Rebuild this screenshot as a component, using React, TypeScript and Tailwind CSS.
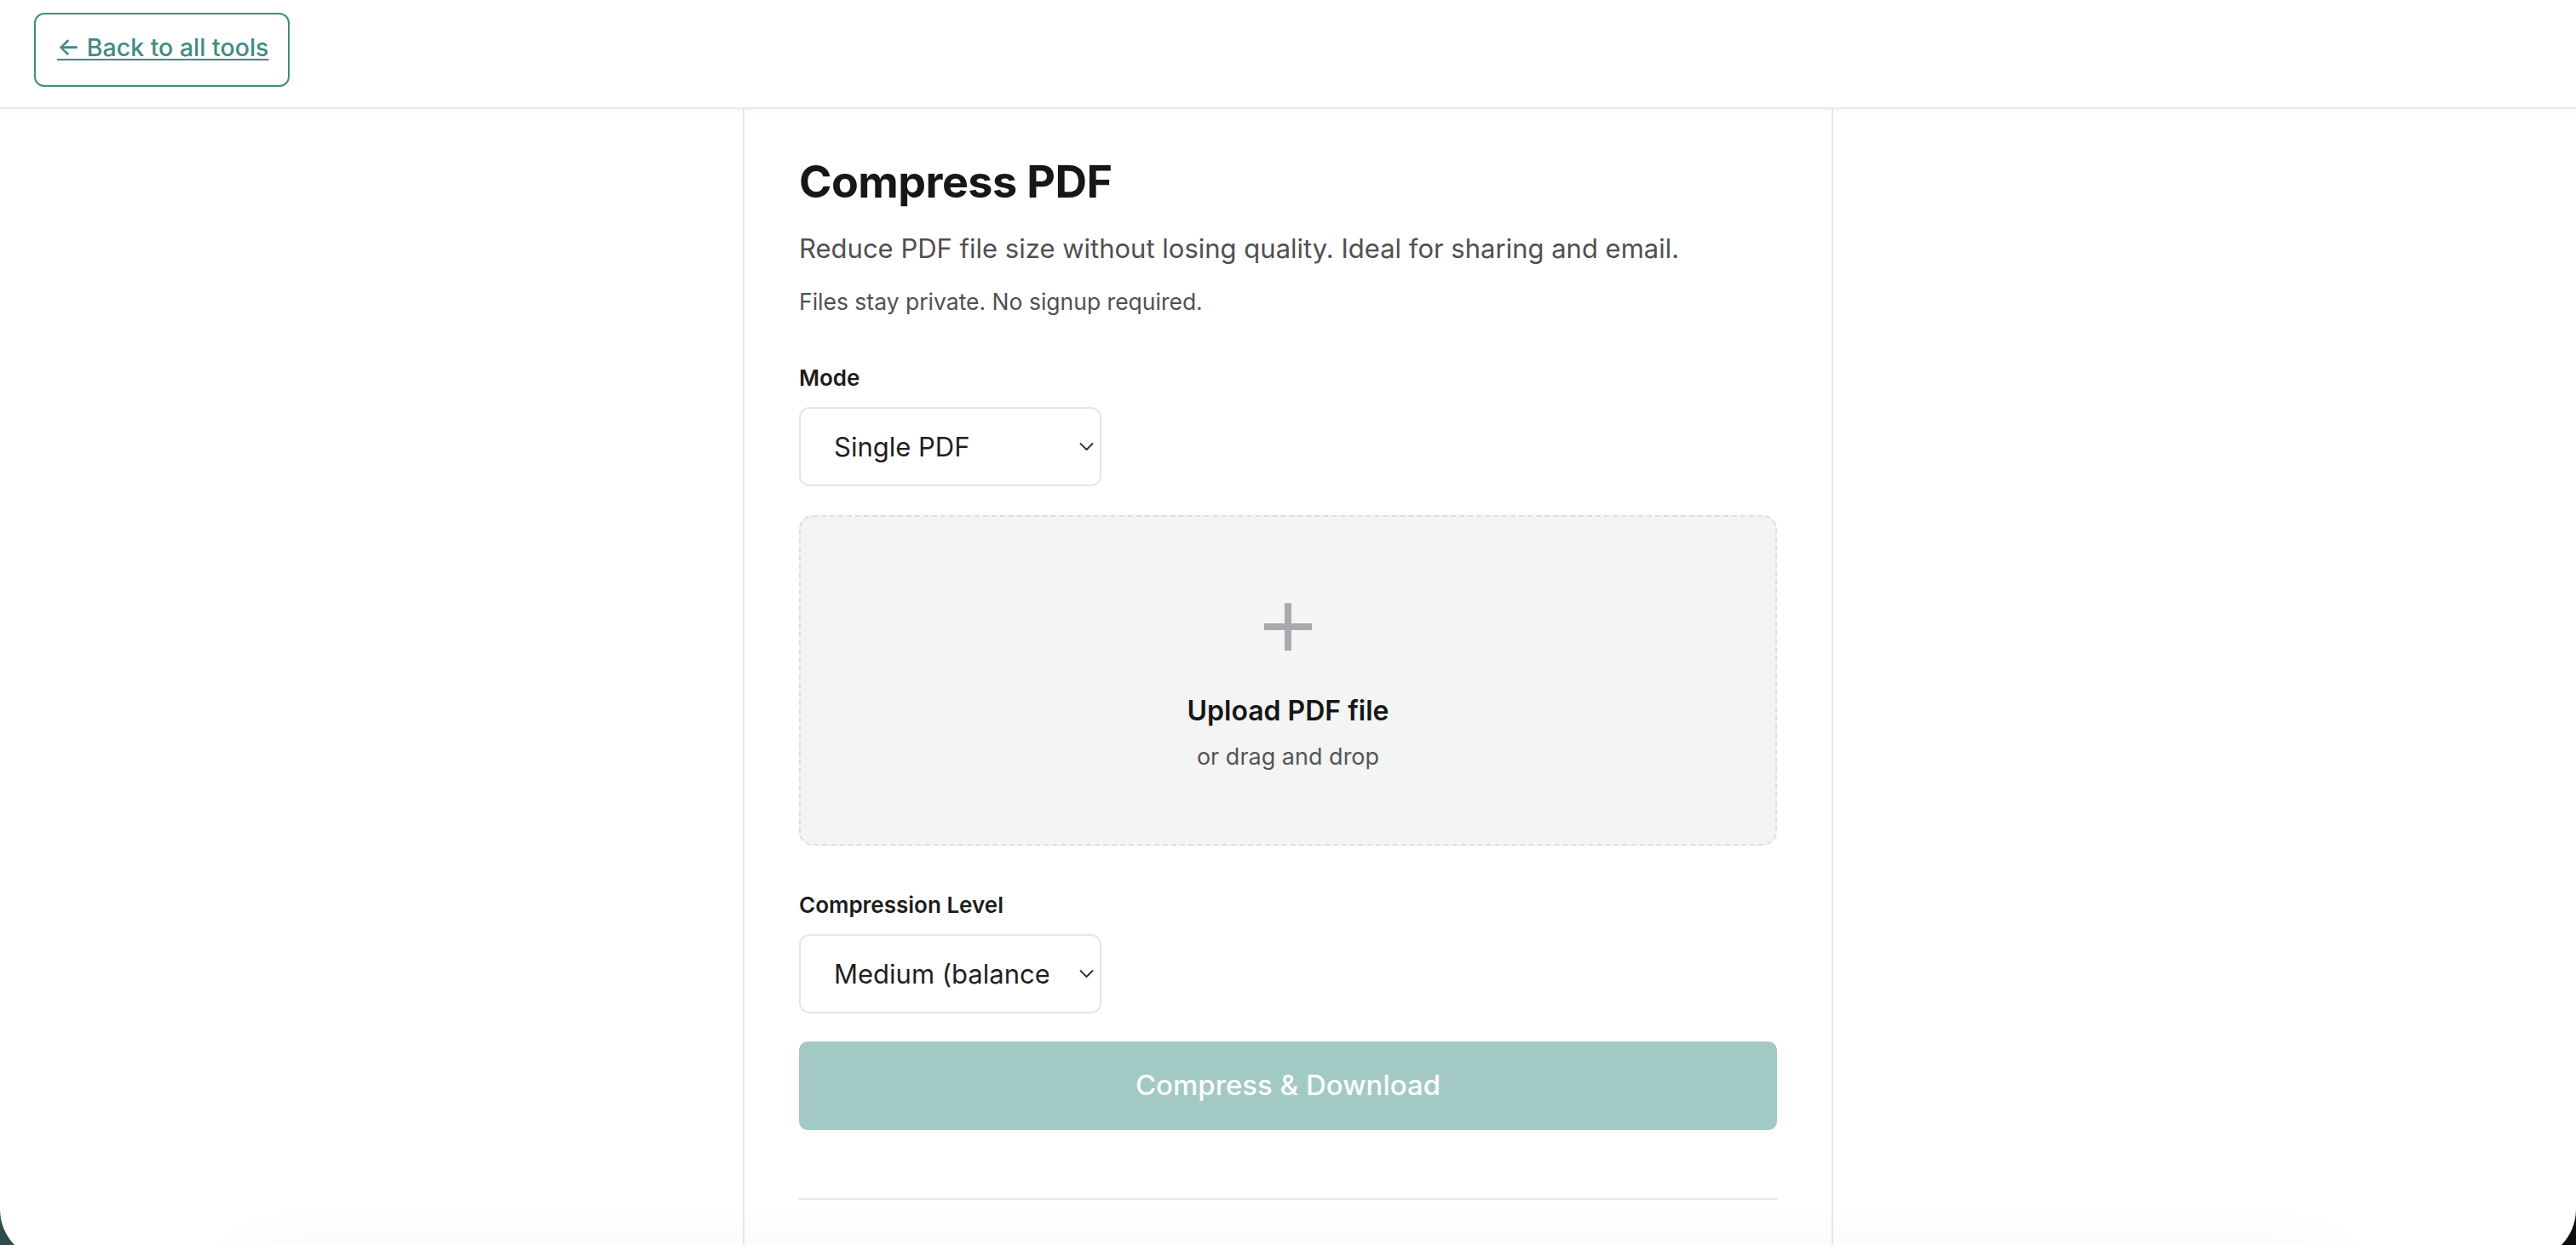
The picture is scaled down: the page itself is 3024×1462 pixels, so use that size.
import React from "react";

function Chevron(): JSX.Element {
  return (
    <svg width="17" height="11" viewBox="0 0 17 11" fill="none" className="shrink-0">
      <polyline points="1.5,2 8.5,9 15.5,2" stroke="#2a2a2a" strokeWidth="1.8" strokeLinecap="round" strokeLinejoin="round" />
    </svg>
  );
}

function SelectBox({ value }: { value: string }): JSX.Element {
  return (
    <div className="flex h-[93px] w-[355px] items-center rounded-[12px] border-2 border-[#e6e6e6] bg-white pl-[39px] pr-[7px]">
      <span className="w-[252px] overflow-hidden whitespace-nowrap text-[31px] leading-[40px] text-[#1f1f1f]">{value}</span>
      <span className="flex-1" />
      <Chevron />
    </div>
  );
}

function FieldLabel({ children, className = "" }: { children: React.ReactNode; className?: string }): JSX.Element {
  return <div className={`text-[26px] font-semibold leading-[36px] text-[#1c1c1c] ${className}`}>{children}</div>;
}

export default function App(): JSX.Element {
  return (
    <div className="h-[1462px] overflow-hidden bg-[linear-gradient(90deg,#2e4b49,#0c0c0c)] font-['Inter',sans-serif]">
      <div className="h-[1480px] overflow-hidden rounded-b-[60px] bg-white">
        <header className="relative z-10 h-[128px] border-b-2 border-[#e9e9e9] bg-white pl-[40px] pt-[15px] shadow-[0_2px_8px_rgba(0,0,0,0.04)]">
          <a
            href="#"
            className="flex h-[87px] w-[300px] items-center rounded-[12px] border-2 border-[#3f8c81] pb-[6px] pl-[25px] text-[28.5px] font-medium leading-[40px] text-[#3f8c81] underline decoration-2 underline-offset-[3px]"
          >
            ← Back to all tools
          </a>
        </header>

        <main className="mx-auto h-[1352px] w-[1280px] border-x-2 border-[#e8e8e8] bg-white px-16 pt-[55px]">
          <h1 className="text-[52px] font-bold leading-[62px] tracking-[-0.01em] text-[#171717]">Compress PDF</h1>
          <p className="mt-[27px] text-[31px] leading-[40px] text-[#505050]">
            Reduce PDF file size without losing quality. Ideal for sharing and email.
          </p>
          <p className="mt-[24px] text-[26.5px] leading-[36px] text-[#505050]">Files stay private. No signup required.</p>

          <FieldLabel className="mt-[54px]">Mode</FieldLabel>
          <div className="mt-[16px]">
            <SelectBox value="Single PDF" />
          </div>

          <div className="mt-[34px] flex h-[388px] flex-col items-center rounded-[16px] border-2 border-dashed border-[#dedede] bg-[#f3f4f4] pt-[101px]">
            <svg width="56" height="56" viewBox="0 0 56 56">
              <rect x="24" y="0" width="8" height="56" fill="#a9abae" />
              <rect x="0" y="24" width="56" height="8" fill="#a9abae" />
            </svg>
            <div className="mt-[51px] text-[32px] font-semibold leading-[40px] text-[#161616]">Upload PDF file</div>
            <div className="mt-[16px] text-[27px] leading-[36px] text-[#555555]">or drag and drop</div>
          </div>

          <FieldLabel className="mt-[52px]">Compression Level</FieldLabel>
          <div className="mt-[16px]">
            <SelectBox value="Medium (balanced)" />
          </div>

          <button
            type="button"
            disabled
            className="mt-[33px] flex h-[104px] w-full items-center justify-center rounded-[10px] bg-[#a2c9c3] text-[33px] font-medium text-white"
          >
            Compress &amp; Download
          </button>

          <div className="mt-[80px] h-[2px] bg-[#e6e6e6]" />
        </main>

        <div className="relative mx-[270px] h-[200px] rounded-t-[40px] bg-white shadow-[0_-10px_80px_rgba(0,0,0,0.035)]" />
      </div>
    </div>
  );
}
